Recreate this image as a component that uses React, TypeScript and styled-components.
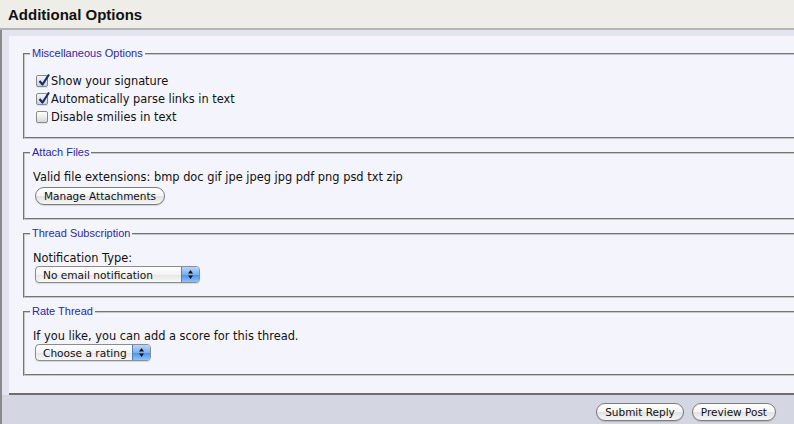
import React from "react";
import styled, { createGlobalStyle } from "styled-components";

const Global = createGlobalStyle`
  html, body { margin: 0; padding: 0; overflow: hidden; }
  body { background: #d4d6e2; font-family: "DejaVu Sans", "Liberation Sans", sans-serif; }
`;

const Page = styled.div`
  width: 794px;
  height: 424px;
  overflow: hidden;
  display: flex;
  flex-direction: column;
`;

const Header = styled.div`
  height: 28px;
  background: #eeede8;
  border-bottom: 2px solid #b4b4b4;
  padding-left: 8px;
  display: flex;
  align-items: center;
  font: bold 15px "Liberation Sans", sans-serif;
  color: #111;
`;

const Body = styled.div`
  flex: 1;
  border-left: 2px solid #8a8a8a;
  background: #d4d6e2;
`;

const Wrap = styled.div`
  background: #e2e5f0;
  padding: 6px 0 0 7px;
`;

const Panel = styled.div`
  background: #f4f4fc;
  border-bottom: 2px solid #6e6e6e;
  padding: 11px 0 17px 14px;
  display: flex;
  flex-direction: column;
  gap: 7px;
`;

const Fieldset = styled.fieldset<{ $top?: number; $bottom?: number }>`
  margin: 0 -20px 0 0;
  padding: ${(p) => p.$top ?? 11}px 8px ${(p) => p.$bottom ?? 13}px;
  border: 2px groove #c8c8c8;
  min-width: 0;
`;

const Legend = styled.legend`
  margin-left: -3px;
  padding: 0 2px;
  font: 11px/13px "Liberation Sans", sans-serif;
  color: #2a2aa6;
`;

const Text = styled.div`
  font-size: 11.4px;
  line-height: 14px;
  color: #111;
`;

const Row = styled.label`
  display: flex;
  align-items: center;
  height: 18px;
  font-size: 11.4px;
  color: #111;
  gap: 3px;
  padding-left: 3px;
`;

const Box = styled.span<{ $on?: boolean }>`
  position: relative;
  width: 12px;
  height: 12px;
  border: 1px solid #8a8a8a;
  border-radius: 2px;
  box-sizing: border-box;
  background: ${(p) =>
    p.$on
      ? "linear-gradient(#f2f5fb, #c8d3e6)"
      : "linear-gradient(#ffffff, #d8d8d8)"};
  box-shadow: 0 1px 0 rgba(0,0,0,0.08);
`;

const Check = styled.svg`
  position: absolute;
  left: 0px;
  top: -3px;
`;

const Button = styled.button`
  height: 18px;
  padding: 0 8px;
  border: 1px solid #7c7c7c;
  border-radius: 9px;
  background: linear-gradient(#ffffff 0%, #f4f4f4 50%, #e2e2e2 51%, #f6f6f6 100%);
  font: 10.5px "DejaVu Sans", sans-serif;
  color: #111;
  box-shadow: 0 1px 1px rgba(0,0,0,0.15);
  align-self: flex-start;
  margin-left: 2px;
`;

const Popup = styled.div<{ $w: number }>`
  width: ${(p) => p.$w}px;
  height: 17px;
  box-sizing: border-box;
  margin-left: 2px;
  border: 1px solid #8c8c8c;
  border-radius: 4px;
  background: linear-gradient(#ffffff 0%, #f3f3f3 50%, #e6e6e6 51%, #f7f7f7 100%);
  display: flex;
  align-items: center;
  overflow: hidden;
  font-size: 10.6px;
  color: #111;
  box-shadow: 0 1px 1px rgba(0,0,0,0.12);
`;

const PopText = styled.span`
  flex: 1;
  padding-left: 7px;
  white-space: nowrap;
`;

const Arrows = styled.span`
  width: 17px;
  flex: none;
  height: 100%;
  border-left: 1px solid #5a7fb8;
  background: linear-gradient(#b8d6fb 0%, #7bb0f2 50%, #4a8fe8 51%, #8cc4fb 100%);
  display: flex;
  align-items: center;
  justify-content: center;
`;

const Stack = styled.div<{ $gap: number }>`
  display: flex;
  flex-direction: column;
  gap: ${(p) => p.$gap}px;
`;

const Footer = styled.div`
  display: flex;
  justify-content: flex-end;
  gap: 8px;
  padding: 8px 18px 0 0;
`;

const FooterButton = styled(Button)`
  margin-left: 0;
`;

const CheckBox = ({ on, label }: { on?: boolean; label: string }) => (
  <Row>
    <Box $on={on}>
      {on && (
        <Check width="14" height="14" viewBox="0 0 14 14">
          <path d="M2.5 8 L5.5 11.5 L12 1.5" fill="none" stroke="#1c2d5c" strokeWidth="2.2" strokeLinejoin="round" />
        </Check>
      )}
    </Box>
    {label}
  </Row>
);

const Select = ({ w, label }: { w: number; label: string }) => (
  <Popup $w={w}>
    <PopText>{label}</PopText>
    <Arrows>
      <svg width="7" height="11" viewBox="0 0 7 11">
        <path d="M3.5 1 L6 4.5 L1 4.5 Z M3.5 10 L6 6.5 L1 6.5 Z" fill="#111" />
      </svg>
    </Arrows>
  </Popup>
);

export default function App() {
  return (
    <Page>
      <Global />
      <Header>Additional Options</Header>
      <Body>
        <Wrap>
          <Panel>
            <Fieldset $top={12} $bottom={11}>
              <Legend>Miscellaneous Options</Legend>
              <CheckBox on label="Show your signature" />
              <CheckBox on label="Automatically parse links in text" />
              <CheckBox label="Disable smilies in text" />
            </Fieldset>
            <Fieldset $top={11} $bottom={13}>
              <Legend>Attach Files</Legend>
              <Stack $gap={3}>
                <Text>Valid file extensions: bmp doc gif jpe jpeg jpg pdf png psd txt zip</Text>
                <Button>Manage Attachments</Button>
              </Stack>
            </Fieldset>
            <Fieldset>
              <Legend>Thread Subscription</Legend>
              <Stack $gap={1}>
                <Text>Notification Type:</Text>
                <Select w={165} label="No email notification" />
              </Stack>
            </Fieldset>
            <Fieldset>
              <Legend>Rate Thread</Legend>
              <Stack $gap={1}>
                <Text>If you like, you can add a score for this thread.</Text>
                <Select w={116} label="Choose a rating" />
              </Stack>
            </Fieldset>
          </Panel>
        </Wrap>
        <Footer>
          <FooterButton>Submit Reply</FooterButton>
          <FooterButton>Preview Post</FooterButton>
        </Footer>
      </Body>
    </Page>
  );
}
